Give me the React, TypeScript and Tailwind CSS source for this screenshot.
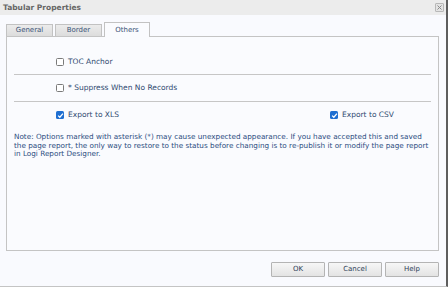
import React from 'react';

const FONT = { fontFamily: '"DejaVu Sans", Verdana, sans-serif' };

const Box: React.FC<{ checked?: boolean }> = ({ checked }) =>
    checked ? (
        <span className="w-[8px] h-[8px] rounded-[1.5px] bg-[#1f6fd1] flex items-center justify-center shrink-0">
            <svg width="7" height="7" viewBox="0 0 8 8">
                <path d="M1.3 4.2 L3.2 6 L6.8 1.8" fill="none" stroke="#fff" strokeWidth="1.4" />
            </svg>
        </span>
    ) : (
        <span className="w-[8px] h-[8px] rounded-[1.5px] border border-[#7a7a7a] bg-white shrink-0" />
    );

const Check: React.FC<{ label: string; checked?: boolean }> = ({ label, checked }) => (
    <label className="flex items-center gap-[4px] text-[7.5px] text-[#2f4a70]">
        <Box checked={checked} />
        <span>{label}</span>
    </label>
);

const Btn: React.FC<{ label: string }> = ({ label }) => (
    <button className="w-[54px] h-[15px] flex items-center justify-center border border-[#b4b4b4] rounded-[1px] bg-gradient-to-b from-[#f7f7f7] to-[#e3e3e3] text-[7px] text-[#2e3f58]">
        {label}
    </button>
);

export default function App() {
    return (
        <div style={FONT} className="w-[448px] h-[287px] flex flex-col bg-[#f9fafe] border-r-2 border-r-[#5e5e5e] border-b border-b-[#c4c4c4]">
            {/* title bar */}
            <div className="h-[15px] shrink-0 flex items-center justify-between bg-[#ececec] pl-[3px] pr-[2px]">
                <span className="text-[7.5px] font-bold text-[#666]">Tabular Properties</span>
                <span className="w-[9px] h-[9px] border border-[#b8b8b8] rounded-[1px] bg-[#e4e4e4] flex items-center justify-center">
                    <svg width="5" height="5" viewBox="0 0 5 5">
                        <path d="M0.5 0.5 L4.5 4.5 M4.5 0.5 L0.5 4.5" stroke="#8a8a8a" strokeWidth="1" />
                    </svg>
                </span>
            </div>

            {/* tabs */}
            <div className="flex items-end gap-[2px] pl-[6px] mt-[7px] h-[14px]">
                <div className="w-[47px] h-[12px] flex items-center justify-center border border-[#c2c2c2] border-b-0 bg-gradient-to-b from-[#ececec] to-[#dcdcdc] text-[7px] text-[#3c5478]">
                    General
                </div>
                <div className="w-[47px] h-[12px] flex items-center justify-center border border-[#c2c2c2] border-b-0 bg-gradient-to-b from-[#ececec] to-[#dcdcdc] text-[7px] text-[#3c5478]">
                    Border
                </div>
                <div className="relative z-10 w-[46px] h-[15px] -mb-px flex items-center justify-center border border-[#c2c2c2] border-b-0 bg-[#fafbfe] text-[7px] text-[#3c5478]">
                    Others
                </div>
            </div>

            {/* panel */}
            <div className="ml-[6px] w-[433px] h-[215px] border border-[#c4c4c4] bg-[#fafbfe] flex flex-col">
                <div className="pl-[49px] pt-[18px] h-[37px]">
                    <div className="h-[14px] flex items-center">
                        <Check label="TOC Anchor" />
                    </div>
                </div>
                <div className="mx-[7px] h-px bg-[#c6c6c6]" />
                <div className="pl-[49px] h-[26px] flex items-center">
                    <Check label="* Suppress When No Records" />
                </div>
                <div className="mx-[7px] h-px bg-[#c6c6c6]" />
                <div className="pl-[49px] pt-[6px] h-[20px] flex items-center">
                    <div className="w-[274px]">
                        <Check label="Export to XLS" checked />
                    </div>
                    <Check label="Export to CSV" checked />
                </div>
                <p className="mt-[11px] pl-[7px] text-[7.25px] leading-[8.5px] text-[#2b4c7e]">
                    Note: Options marked with asterisk (*) may cause unexpected appearance. If you have accepted this and saved
                    <br />
                    the page report, the only way to restore to the status before changing is to re-publish it or modify the page report
                    <br />
                    in Logi Report Designer.
                </p>
            </div>

            {/* buttons */}
            <div className="mt-[11px] flex justify-end gap-[3px] pr-[7px]">
                <Btn label="OK" />
                <Btn label="Cancel" />
                <Btn label="Help" />
            </div>
        </div>
    );
}
